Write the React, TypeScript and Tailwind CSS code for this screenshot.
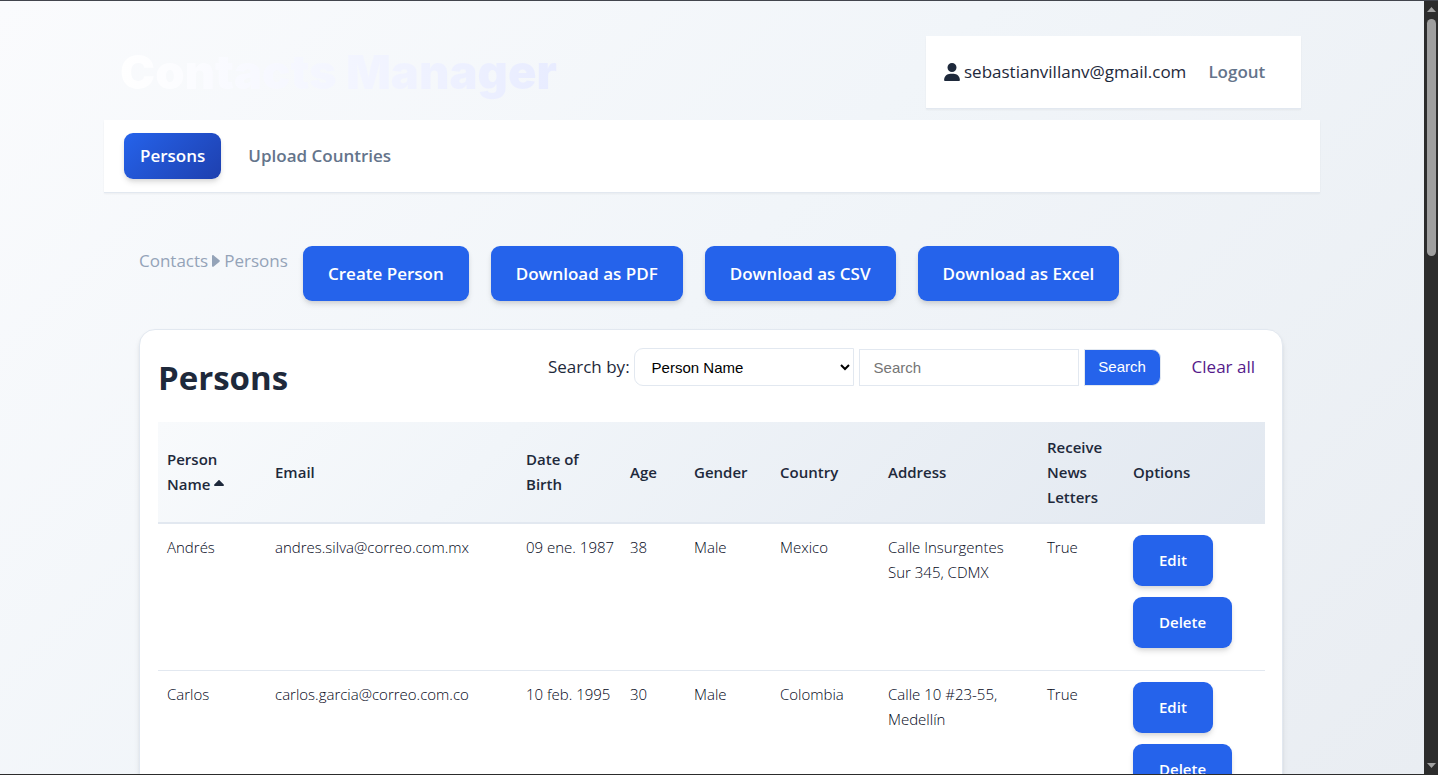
import React from "react";

type Person = {
  name: string;
  email: string;
  birth: string;
  age: number;
  gender: string;
  country: string;
  address: string;
  newsLetters: string;
};

const persons: Person[] = [
  {
    name: "Andrés",
    email: "andres.silva@correo.com.mx",
    birth: "09 ene. 1987",
    age: 38,
    gender: "Male",
    country: "Mexico",
    address: "Calle Insurgentes Sur 345, CDMX",
    newsLetters: "True",
  },
  {
    name: "Carlos",
    email: "carlos.garcia@correo.com.co",
    birth: "10 feb. 1995",
    age: 30,
    gender: "Male",
    country: "Colombia",
    address: "Calle 10 #23-55, Medellín",
    newsLetters: "True",
  },
];

const actions = ["Create Person", "Download as PDF", "Download as CSV", "Download as Excel"];
const shadow = "shadow-[0_4px_6px_-1px_rgba(0,0,0,0.12),0_2px_4px_-1px_rgba(0,0,0,0.08)]";

function UserIcon() {
  return (
    <svg viewBox="0 0 448 512" className="h-[18px] w-4 shrink-0" fill="currentColor" aria-hidden="true">
      <path d="M224 256A128 128 0 1 0 224 0a128 128 0 1 0 0 256zm-45.700 48C79.800 304 0 383.800 0 482.300C0 498.700 13.300 512 29.700 512H418.300c16.400 0 29.700-13.300 29.700-29.700C448 383.800 368.200 304 269.700 304H178.300z" />
    </svg>
  );
}

function CaretRight() {
  return (
    <svg viewBox="0 0 8 12" className="h-3 w-2" fill="currentColor" aria-hidden="true">
      <path d="M0 1.200C0 .2 1 -.2 1.700.4L7.500 5.300C7.900 5.700 7.900 6.300 7.500 6.700L1.700 11.600C1 12.200 0 11.800 0 10.800Z" />
    </svg>
  );
}

function SortUp() {
  return (
    <svg viewBox="0 0 10 6" className="mb-1.5 ml-1 inline-block h-1.5 w-2.5" fill="currentColor" aria-hidden="true">
      <path d="M4.300.4C4.700 0 5.300 0 5.700.4L9.700 4.600C10.200 5.100 9.900 6 9.100 6H.9C.1 6-.2 5.100.3 4.600Z" />
    </svg>
  );
}

function Header() {
  return (
    <header className="flex items-start justify-between pr-[19px] pl-4">
      <h1 className="mt-1.5 bg-linear-to-r from-white to-[#e8ecff] bg-clip-text font-['Inter'] text-[47px] leading-[60px] font-black text-transparent">
        Contacts Manager
      </h1>
      <div className="flex h-[73px] w-[375px] items-center border-b border-[#e2e8f0] bg-white pl-[18px] shadow-xs">
        <UserIcon />
        <span className="ml-1">sebastianvillanv@gmail.com</span>
        <a href="#logout" className="ml-[22px] font-semibold text-[#64748b]">
          Logout
        </a>
      </div>
    </header>
  );
}

function SearchForm() {
  return (
    <form className="flex items-center" onSubmit={(e) => e.preventDefault()}>
      <label htmlFor="search-by">Search by:</label>
      <select
        id="search-by"
        className="ml-1 h-[38px] w-[220px] rounded-l-[9px] border border-[#e2e8f0] bg-white pl-[13px] font-['Liberation_Sans'] text-[15px] font-normal text-black"
      >
        <option>Person Name</option>
      </select>
      <input
        type="search"
        aria-label="Search"
        placeholder="Search"
        className="ml-[5px] h-[37px] w-[220px] border border-[#e2e8f0] bg-white px-[14px] font-['Liberation_Sans'] text-[15px] font-normal placeholder:text-[#757575]"
      />
      <button
        type="submit"
        className="ml-[5px] h-[37px] w-[77px] rounded-r-[9px] border border-[#e2e8f0] bg-[#2563eb] font-['Liberation_Sans'] text-[15px] font-normal text-white"
      >
        Search
      </button>
      <a href="#clear" className="ml-[31px] text-[#551a8b]">
        Clear all
      </a>
    </form>
  );
}

function PersonsTable() {
  return (
    <table className="mt-6 w-full table-fixed border-collapse text-left text-[15px] leading-[25px]">
      <colgroup>
        <col className="w-[108px]" />
        <col className="w-[251px]" />
        <col className="w-[104px]" />
        <col className="w-[64px]" />
        <col className="w-[86px]" />
        <col className="w-[108px]" />
        <col className="w-[159px]" />
        <col className="w-[86px]" />
        <col className="w-[141px]" />
      </colgroup>
      <thead className="bg-[linear-gradient(135deg,#f8fafc_0%,#f1f5f9_30%,#e2e8f0_100%)]">
        <tr className="h-[101px] border-b-2 border-[#e2e8f0] [&>th]:px-[9px] [&>th]:font-semibold">
          <th>
            Person Name
            <SortUp />
          </th>
          <th>Email</th>
          <th>Date of Birth</th>
          <th>Age</th>
          <th>Gender</th>
          <th>Country</th>
          <th>Address</th>
          <th>Receive News Letters</th>
          <th>Options</th>
        </tr>
      </thead>
      <tbody className="font-light text-slate-950">
        {persons.map((p) => (
          <tr key={p.email} className="h-[147px] border-b border-[#e2e8f0] align-top [&>td]:px-[9px] [&>td]:pt-[11px]">
            <td>{p.name}</td>
            <td>{p.email}</td>
            <td className="whitespace-nowrap">{p.birth}</td>
            <td>{p.age}</td>
            <td>{p.gender}</td>
            <td>{p.country}</td>
            <td>{p.address}</td>
            <td>{p.newsLetters}</td>
            <td>
              <div className="flex flex-col items-start gap-[11px]">
                <a href="#edit" className={`rounded-[9px] bg-[#2563eb] px-[26px] py-[13px] font-semibold text-white ${shadow}`}>
                  Edit
                </a>
                <a href="#delete" className={`rounded-[9px] bg-[#2563eb] px-[26px] py-[13px] font-semibold text-white ${shadow}`}>
                  Delete
                </a>
              </div>
            </td>
          </tr>
        ))}
      </tbody>
    </table>
  );
}

function ScrollRail() {
  return (
    <div className="flex w-3.5 shrink-0 flex-col items-center justify-between bg-[#2c2c2c] pt-1.5 pb-1.5" aria-hidden="true">
      <div className="flex flex-col items-center gap-[7px]">
        <svg viewBox="0 0 9 5" className="h-[5px] w-[9px]" fill="#a0a0a0">
          <path d="M4.500 0L9 5H0Z" />
        </svg>
        <div className="h-[237px] w-[9px] rounded-full bg-[#9f9f9f]" />
      </div>
      <svg viewBox="0 0 9 5" className="h-[5px] w-[9px]" fill="#a0a0a0">
        <path d="M4.500 5L9 0H0Z" />
      </svg>
    </div>
  );
}

export default function App() {
  return (
    <div className="flex h-screen border-t border-b border-t-[#42454d] border-b-[#2c2c2c] font-['Open_Sans',sans-serif] text-[17px] leading-[30px] text-[#1e293b]">
      <div className="min-w-0 flex-1 overflow-y-auto bg-[linear-gradient(135deg,#fafbfd_0%,#f1f5f9_45%,#e9edf2_100%)] [scrollbar-width:none]">
        <div className="mx-auto w-full max-w-[1216px] pt-[35px]">
          <Header />
          <nav className="mt-[11px] flex h-[73px] items-center border-b border-[#e2e8f0] bg-white px-5 font-semibold shadow-xs">
            <a href="#persons" className={`rounded-[9px] bg-linear-135 from-[#2563eb] to-[#1e40af] px-4 py-2 text-white ${shadow}`}>
              Persons
            </a>
            <a href="#upload" className="ml-[27px] text-[#64748b]">
              Upload Countries
            </a>
          </nav>
          <main className="mt-[53px] pr-[37px] pl-[35px]">
            <div className="flex items-start">
              <div className="flex w-[164px] shrink-0 items-center gap-1 text-[#94a3b8]">
                <a href="#contacts">Contacts</a>
                <CaretRight />
                <span>Persons</span>
              </div>
              <div className="flex gap-[22px]">
                {actions.map((label) => (
                  <a key={label} href="#action" className={`flex h-[55px] items-center rounded-[9px] bg-[#2563eb] px-[25px] font-semibold text-white ${shadow}`}>
                    {label}
                  </a>
                ))}
              </div>
            </div>
            <section className="mt-7 rounded-2xl border border-[#e2e8f0] bg-white p-[18px] shadow-md">
              <div className="flex items-start justify-between pr-[9px]">
                <h2 className="mt-2.5 text-[33px] leading-10 font-bold">Persons</h2>
                <SearchForm />
              </div>
              <PersonsTable />
            </section>
          </main>
        </div>
      </div>
      <ScrollRail />
    </div>
  );
}
